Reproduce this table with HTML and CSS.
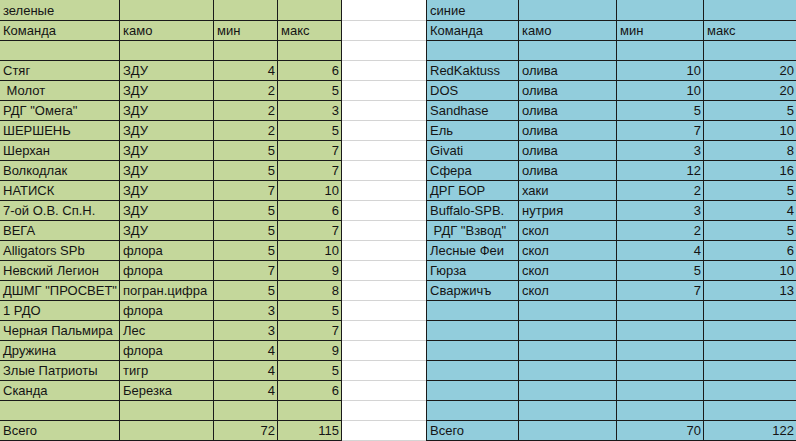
FILE: index.html
```html
<!DOCTYPE html>
<html lang="ru">
<head>
<meta charset="utf-8">
<title>Команды</title>
<link rel="stylesheet" href="styles.css">
</head>
<body>
<div class="sheet">
  <div class="table green">
    <div class="c">зеленые</div><div class="c"></div><div class="c"></div><div class="c"></div>
    <div class="c">Команда</div><div class="c">камо</div><div class="c">мин</div><div class="c">макс</div>
    <div class="c"></div><div class="c"></div><div class="c"></div><div class="c"></div>
    <div class="c">Стяг</div><div class="c">ЗДУ</div><div class="c n">4</div><div class="c n">6</div>
    <div class="c">&nbsp;Молот</div><div class="c">ЗДУ</div><div class="c n">2</div><div class="c n">5</div>
    <div class="c">РДГ "Омега"</div><div class="c">ЗДУ</div><div class="c n">2</div><div class="c n">3</div>
    <div class="c">ШЕРШЕНЬ</div><div class="c">ЗДУ</div><div class="c n">2</div><div class="c n">5</div>
    <div class="c">Шерхан</div><div class="c">ЗДУ</div><div class="c n">5</div><div class="c n">7</div>
    <div class="c">Волкодлак</div><div class="c">ЗДУ</div><div class="c n">5</div><div class="c n">7</div>
    <div class="c">НАТИСК</div><div class="c">ЗДУ</div><div class="c n">7</div><div class="c n">10</div>
    <div class="c">7-ой О.В. Сп.Н.</div><div class="c">ЗДУ</div><div class="c n">5</div><div class="c n">6</div>
    <div class="c">ВЕГА</div><div class="c">ЗДУ</div><div class="c n">5</div><div class="c n">7</div>
    <div class="c">Alligators SPb</div><div class="c">флора</div><div class="c n">5</div><div class="c n">10</div>
    <div class="c">Невский Легион</div><div class="c">флора</div><div class="c n">7</div><div class="c n">9</div>
    <div class="c">ДШМГ "ПРОСВЕТ"</div><div class="c">погран.цифра</div><div class="c n">5</div><div class="c n">8</div>
    <div class="c">1 РДО</div><div class="c">флора</div><div class="c n">3</div><div class="c n">5</div>
    <div class="c">Черная Пальмира</div><div class="c">Лес</div><div class="c n">3</div><div class="c n">7</div>
    <div class="c">Дружина</div><div class="c">флора</div><div class="c n">4</div><div class="c n">9</div>
    <div class="c">Злые Патриоты</div><div class="c">тигр</div><div class="c n">4</div><div class="c n">5</div>
    <div class="c">Сканда</div><div class="c">Березка</div><div class="c n">4</div><div class="c n">6</div>
    <div class="c"></div><div class="c"></div><div class="c"></div><div class="c"></div>
    <div class="c">Всего</div><div class="c"></div><div class="c n">72</div><div class="c n">115</div>
  </div>
  <div class="gap">
    <div class="g"></div><div class="g"></div><div class="g"></div><div class="g"></div><div class="g"></div><div class="g"></div>
    <div class="g"></div><div class="g"></div><div class="g"></div><div class="g"></div><div class="g"></div><div class="g"></div>
    <div class="g"></div><div class="g"></div><div class="g"></div><div class="g"></div><div class="g"></div><div class="g"></div>
    <div class="g"></div><div class="g"></div><div class="g"></div><div class="g"></div>
  </div>
  <div class="table blue">
    <div class="c">синие</div><div class="c"></div><div class="c"></div><div class="c"></div>
    <div class="c">Команда</div><div class="c">камо</div><div class="c">мин</div><div class="c">макс</div>
    <div class="c"></div><div class="c"></div><div class="c"></div><div class="c"></div>
    <div class="c">RedKaktuss</div><div class="c">олива</div><div class="c n">10</div><div class="c n">20</div>
    <div class="c">DOS</div><div class="c">олива</div><div class="c n">10</div><div class="c n">20</div>
    <div class="c">Sandhase</div><div class="c">олива</div><div class="c n">5</div><div class="c n">5</div>
    <div class="c">Ель</div><div class="c">олива</div><div class="c n">7</div><div class="c n">10</div>
    <div class="c">Givati</div><div class="c">олива</div><div class="c n">3</div><div class="c n">8</div>
    <div class="c">Сфера</div><div class="c">олива</div><div class="c n">12</div><div class="c n">16</div>
    <div class="c">ДРГ БОР</div><div class="c">хаки</div><div class="c n">2</div><div class="c n">5</div>
    <div class="c">Buffalo-SPB.</div><div class="c">нутрия</div><div class="c n">3</div><div class="c n">4</div>
    <div class="c">&nbsp;РДГ "Взвод"</div><div class="c">скол</div><div class="c n">2</div><div class="c n">5</div>
    <div class="c">Лесные Феи</div><div class="c">скол</div><div class="c n">4</div><div class="c n">6</div>
    <div class="c">Гюрза</div><div class="c">скол</div><div class="c n">5</div><div class="c n">10</div>
    <div class="c">Сваржичъ</div><div class="c">скол</div><div class="c n">7</div><div class="c n">13</div>
    <div class="c"></div><div class="c"></div><div class="c"></div><div class="c"></div>
    <div class="c"></div><div class="c"></div><div class="c"></div><div class="c"></div>
    <div class="c"></div><div class="c"></div><div class="c"></div><div class="c"></div>
    <div class="c"></div><div class="c"></div><div class="c"></div><div class="c"></div>
    <div class="c"></div><div class="c"></div><div class="c"></div><div class="c"></div>
    <div class="c"></div><div class="c"></div><div class="c"></div><div class="c"></div>
    <div class="c">Всего</div><div class="c"></div><div class="c n">70</div><div class="c n">122</div>
  </div>
</div>
</body>
</html>
```
FILE: styles.css
```css
* { box-sizing: border-box; }
html, body { margin: 0; padding: 0; background: #fff; }
body {
  font-family: "Liberation Sans", Arial, sans-serif;
  font-size: 13px;
  color: #141414;
  width: 796px;
  height: 441px;
  overflow: hidden;
}
.sheet {
  display: flex;
  align-items: flex-start;
}
.table {
  display: grid;
  grid-template-rows: 21px repeat(21, 20px);
}
.green {
  width: 342px;
  grid-template-columns: 120px 94px 64px 64px;
  background: #c4d79b;
}
.blue {
  width: 370px;
  grid-template-columns: 93px 98px 87px 92px;
  background: #92cddc;
}
.c {
  border-bottom: 1px solid #1a1a1a;
  border-right: 1px solid #1a1a1a;
  padding: 0 3px 1px 3px;
  display: flex;
  align-items: flex-end;
  white-space: pre;
  overflow: visible;
  line-height: 16px;
}
.blue .c:nth-child(4n+1) { border-left: 1px solid #1a1a1a; }
.blue .c:nth-child(4n) { border-right: none; }
.n { justify-content: flex-end; padding-right: 2px; }
.gap {
  width: 84px;
  display: grid;
  grid-template-rows: 21px repeat(21, 20px);
}
.g { border-bottom: 1px solid #d4d4d4; }
```
